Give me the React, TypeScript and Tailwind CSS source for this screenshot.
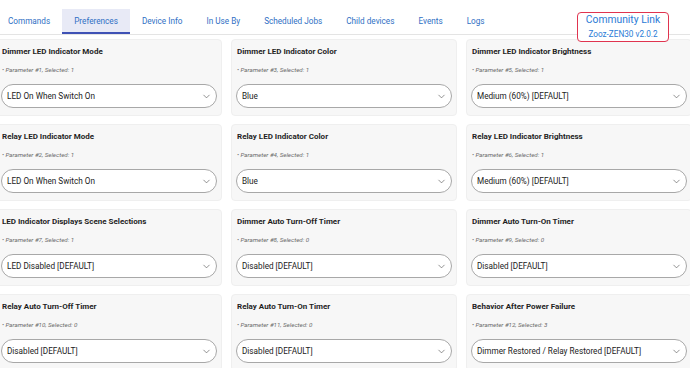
import { ChevronDown } from "lucide-react";

const tabs = [
  "Commands",
  "Preferences",
  "Device Info",
  "In Use By",
  "Scheduled Jobs",
  "Child devices",
  "Events",
  "Logs",
];

const prefs = [
  { title: "Dimmer LED Indicator Mode", num: 1, sel: 1, value: "LED On When Switch On" },
  { title: "Dimmer LED Indicator Color", num: 3, sel: 1, value: "Blue" },
  { title: "Dimmer LED Indicator Brightness", num: 5, sel: 1, value: "Medium (60%) [DEFAULT]" },
  { title: "Relay LED Indicator Mode", num: 2, sel: 1, value: "LED On When Switch On" },
  { title: "Relay LED Indicator Color", num: 4, sel: 1, value: "Blue" },
  { title: "Relay LED Indicator Brightness", num: 6, sel: 1, value: "Medium (60%) [DEFAULT]" },
  { title: "LED Indicator Displays Scene Selections", num: 7, sel: 1, value: "LED Disabled [DEFAULT]" },
  { title: "Dimmer Auto Turn-Off Timer", num: 8, sel: 0, value: "Disabled [DEFAULT]" },
  { title: "Dimmer Auto Turn-On Timer", num: 9, sel: 0, value: "Disabled [DEFAULT]" },
  { title: "Relay Auto Turn-Off Timer", num: 10, sel: 0, value: "Disabled [DEFAULT]" },
  { title: "Relay Auto Turn-On Timer", num: 11, sel: 0, value: "Disabled [DEFAULT]" },
  { title: "Behavior After Power Failure", num: 12, sel: 3, value: "Dimmer Restored / Relay Restored [DEFAULT]" },
];

type Pref = (typeof prefs)[number];

const PrefCard = ({ pref }: { pref: Pref }) => {
  return (
    <div className="h-[77px] flex flex-col rounded-[4px] bg-[#f7f7f7] border border-[#efefef] px-[4px]">
      <p className="mt-[6px] ml-[1px] h-[12px] leading-[12px] text-[8px] font-bold text-[#1f1f1f]">
        {pref.title}
      </p>
      <p className="mt-[7px] ml-[1px] h-[10px] leading-[10px] text-[6.2px] italic text-[#6b6b6b]">
        • Parameter #{pref.num}, Selected: {pref.sel}
      </p>
      <div className="mt-[9px] h-[24px] flex items-center justify-between rounded-full border border-[#a8a8a8] bg-white pl-[5px] pr-[4px]">
        <span className="text-[8.2px] text-[#222]">{pref.value}</span>
        <ChevronDown className="w-[11px] h-[11px] text-[#555]" strokeWidth={1.4} />
      </div>
    </div>
  );
};

const App = () => {
  return (
    <div className="w-[690px] h-[368px] overflow-hidden bg-white font-['Roboto',sans-serif]">
      <div className="ml-[-4px] w-[694px]">
        <div className="relative h-[35px] pt-[9px] border-b border-[#e4e4e4]">
          <div className="flex">
            {tabs.map((tab) => (
              <div
                key={tab}
                className={
                  tab === "Preferences"
                    ? "h-[25px] px-[12px] pt-[1px] flex items-center text-[8.2px] text-[#2f6fc4] bg-[#e8eaf6] border-b-2 border-[#3f51b5]"
                    : "h-[25px] px-[12px] pt-[1px] flex items-center text-[8.2px] text-[#2f6fc4] border-b-2 border-transparent"
                }
              >
                {tab}
              </div>
            ))}
          </div>
          <div className="absolute left-[581px] top-[12px] w-[92px] h-[30px] flex flex-col items-center justify-center rounded-[4px] border-[1.5px] border-[#e0344f] bg-white">
            <span className="text-[10.3px] leading-[14px] text-[#2a7bd6]">Community Link</span>
            <span className="text-[8.2px] leading-[14px] text-[#2a7bd6]">Zooz-ZEN30 v2.0.2</span>
          </div>
        </div>
        <div className="mt-[4px] grid grid-cols-[226px_226px_226px] gap-x-[9px] gap-y-[8px]">
          {prefs.map((pref) => (
            <PrefCard key={pref.num} pref={pref} />
          ))}
        </div>
      </div>
    </div>
  );
};

export default App;
